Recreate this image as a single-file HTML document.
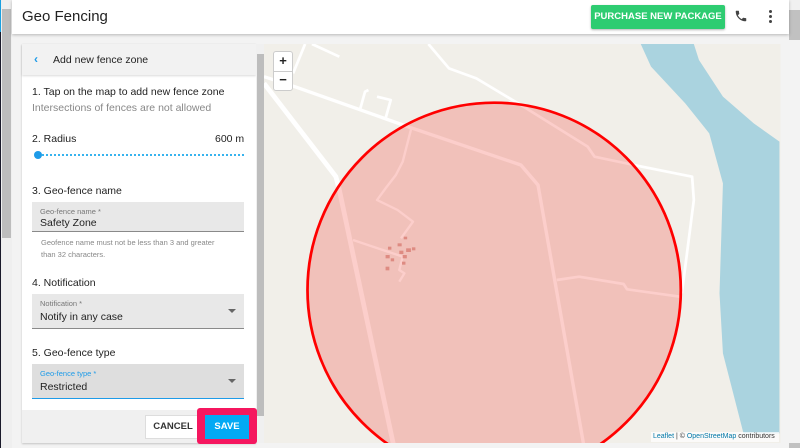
<!DOCTYPE html>
<html><head><meta charset="utf-8"><style>
*{box-sizing:border-box;margin:0;padding:0}
html,body{width:800px;height:448px;overflow:hidden}
body{background:#f3f3f3;font-family:"Liberation Sans",Arial,sans-serif;position:relative;color:#222}
.abs{position:absolute}
.lbl{font-size:10.5px;color:#222}
.field{position:absolute;left:32px;width:212px;background:#e8e8e8;border-bottom:1px solid #8a8a8a}
.field .s{position:absolute;left:8px;top:5px;font-size:7.5px;color:#777}
.field .v{position:absolute;left:8px;font-size:10.5px;color:#222}
.arr{position:absolute;right:8px;width:0;height:0;border-left:4px solid transparent;border-right:4px solid transparent;border-top:4px solid #666}
</style></head><body>
<div class="abs" style="left:0;top:0;width:1px;height:448px;background:#1a1a2a"></div>
<div class="abs" style="left:0;top:0;width:1px;height:32px;background:#1aa0e0"></div>
<div class="abs" style="left:1px;top:0;width:11px;height:448px;background:#efefef"></div>
<div class="abs" style="left:2px;top:9px;width:9px;height:229px;background:#bdbdbd"></div>
<div class="abs" style="left:789px;top:0;width:11px;height:448px;background:#c1c1c1"></div>
<div class="abs" style="left:789px;top:0;width:11px;height:10px;background:#f0f0f0"></div>
<div class="abs" style="left:12px;top:0;width:777px;height:34px;background:#fff;box-shadow:0 1px 3px rgba(0,0,0,.25)"></div>
<div class="abs" style="left:22px;top:8px;font-size:15px;color:#222">Geo Fencing</div>
<div class="abs" style="left:591px;top:5px;width:134px;height:24px;background:#2ecc71;border-radius:2px;box-shadow:0 1px 2px rgba(0,0,0,.3);color:#fff;font-size:9.5px;font-weight:bold;text-align:center;line-height:24px;white-space:nowrap">PURCHASE NEW PACKAGE</div>
<svg class="abs" style="left:734px;top:9px" width="14" height="14" viewBox="0 0 24 24"><path fill="#444" d="M6.6 10.8c1.4 2.8 3.8 5.1 6.6 6.6l2.2-2.2c.3-.3.7-.4 1-.2 1.1.4 2.3.6 3.6.6.6 0 1 .4 1 1V20c0 .6-.4 1-1 1C10.6 21 3 13.4 3 4c0-.6.4-1 1-1h3.5c.6 0 1 .4 1 1 0 1.3.2 2.5.6 3.6.1.3 0 .7-.2 1L6.6 10.8z"/></svg>
<div class="abs" style="left:769px;top:10px;width:3px;height:3px;background:#444;border-radius:50%"></div>
<div class="abs" style="left:769px;top:15px;width:3px;height:3px;background:#444;border-radius:50%"></div>
<div class="abs" style="left:769px;top:20px;width:3px;height:3px;background:#444;border-radius:50%"></div>

<div class="abs" style="left:22px;top:44px;width:234px;height:399px;background:#fff;box-shadow:0 1px 2px rgba(0,0,0,.2)"></div>
<div class="abs" style="left:22px;top:44px;width:234px;height:31px;background:#f2f2f2;box-shadow:0 1px 2px rgba(0,0,0,.15)"></div>
<div class="abs" style="left:34px;top:52px;font-size:12px;color:#1e9be8;font-weight:bold">‹</div>
<div class="abs lbl" style="left:53px;top:54px">Add new fence zone</div>
<div class="abs" style="left:256px;top:44px;width:8px;height:399px;background:#f0f0f0"></div>
<div class="abs" style="left:257px;top:54px;width:7px;height:362px;background:#bdbdbd"></div>

<div class="abs lbl" style="left:32px;top:86px">1. Tap on the map to add new fence zone</div>
<div class="abs" style="left:32px;top:102px;font-size:10.5px;color:#888">Intersections of fences are not allowed</div>
<div class="abs lbl" style="left:32px;top:133px">2. Radius</div>
<div class="abs lbl" style="left:215px;top:133px">600 m</div>
<div class="abs" style="left:38px;top:154px;width:206px;border-top:2px dotted #37b3ee"></div>
<div class="abs" style="left:34px;top:151px;width:8px;height:8px;border-radius:50%;background:#1e9be8"></div>

<div class="abs lbl" style="left:32px;top:185px">3. Geo-fence name</div>
<div class="field" style="top:202px;height:30px"><div class="s">Geo-fence name *</div><div class="v" style="top:15px">Safety Zone</div></div>
<div class="abs" style="left:41px;top:237px;font-size:7.5px;color:#888;line-height:12px">Geofence name must not be less than 3 and greater<br>than 32 characters.</div>

<div class="abs lbl" style="left:32px;top:277px">4. Notification</div>
<div class="field" style="top:294px;height:35px"><div class="s">Notification *</div><div class="v" style="top:17px">Notify in any case</div><div class="arr" style="top:15px"></div></div>

<div class="abs lbl" style="left:32px;top:347px">5. Geo-fence type</div>
<div class="field" style="top:364px;height:35px;background:#dedede;border-bottom:1px solid #1e9be8"><div class="s" style="color:#1e9be8">Geo-fence type *</div><div class="v" style="top:17px">Restricted</div><div class="arr" style="top:15px"></div></div>

<div class="abs" style="left:22px;top:410px;width:234px;height:33px;background:#f0f0f0"></div>
<div class="abs" style="left:145px;top:415px;width:56px;height:24px;background:#fff;border:1px solid #ddd;font-size:9.5px;font-weight:bold;color:#333;text-align:center;line-height:22px">CANCEL</div>
<div class="abs" style="left:197px;top:408px;width:60px;height:36px;background:#f5175f;border-radius:3px"></div>
<div class="abs" style="left:205px;top:415px;width:44px;height:24px;background:#03a9f4;font-size:9.5px;font-weight:bold;color:#fff;text-align:center;line-height:24px">SAVE</div>

<div class="abs" style="left:264px;top:40px;width:536px;height:403px;overflow:hidden">
<svg style="display:block" width="536" height="403" viewBox="0 0 1565 1209" preserveAspectRatio="none">
<rect x="0" y="12" width="1508" height="1198" fill="#f1efe9"/>
<polygon fill="#aad3df" points="1100,12 1255,12 1270,60 1340,170 1430,250 1505,305 1505,1180 1400,1180 1340,940 1330,760 1340,430 1300,280 1230,190 1130,80"/>
<g fill="none" stroke="#fff" stroke-linejoin="round">
<polyline stroke-width="14" points="0,130 180,370 210,410 220,450 380,1224"/>
<polyline stroke-width="10" points="0,110 90,140 420,260 750,375 800,435 935,1224"/>
<polyline stroke-width="8" points="120,12 85,100"/>
<polyline stroke-width="8" points="140,12 220,50"/>
<polyline stroke-width="8" points="480,12 540,85 620,115 750,195 945,320 965,350 1080,375 1250,410 1255,480 1220,760"/>
<polyline stroke-width="8" points="855,720 920,710 1050,732 1060,748 1215,770"/>
<polyline stroke-width="8" points="280,210 295,155 305,150"/>
<polyline stroke-width="8" points="330,170 370,180 355,235"/>
<polyline stroke-width="7" points="430,265 405,365 385,405 355,445 330,480 390,510 435,545 400,595"/>
<polyline stroke-width="7" points="260,600 405,650 395,690 410,700 395,725"/>
</g>
<g fill="#d9a9a2"><rect x="390" y="610" width="12" height="9"/><rect x="408" y="590" width="10" height="8"/><rect x="362" y="620" width="10" height="9"/><rect x="355" y="645" width="12" height="10"/><rect x="370" y="655" width="10" height="9"/><rect x="395" y="632" width="12" height="10"/><rect x="415" y="625" width="14" height="11"/><rect x="405" y="645" width="12" height="10"/><rect x="432" y="622" width="10" height="9"/><rect x="403" y="665" width="10" height="9"/><rect x="355" y="680" width="11" height="11"/></g>
<ellipse cx="672" cy="750" rx="545" ry="562" fill="rgba(240,30,20,0.22)" stroke="#ff0000" stroke-width="8"/>
<rect x="1508" y="0" width="60" height="1224" fill="#f3f3f3"/>
<rect x="0" y="0" width="1565" height="12" fill="#f3f3f3"/>
</svg>
</div>
<div class="abs" style="left:273px;top:51px;width:20px;height:40px;background:#fff;border:1px solid #ccc;border-radius:3px"></div>
<div class="abs" style="left:273px;top:71px;width:20px;height:1px;background:#ccc"></div>
<div class="abs" style="left:273px;top:51px;width:20px;text-align:center;font-size:13px;font-weight:bold;line-height:20px">+</div>
<div class="abs" style="left:273px;top:70px;width:20px;text-align:center;font-size:13px;font-weight:bold;line-height:20px">−</div>
<div class="abs" style="left:651px;top:432px;width:128px;height:10px;background:rgba(255,255,255,.7);font-size:7px;line-height:10px;color:#333;padding-left:2px;white-space:nowrap"><span style="color:#0078a8">Leaflet</span> | © <span style="color:#0078a8">OpenStreetMap</span> contributors</div>
</body></html>
